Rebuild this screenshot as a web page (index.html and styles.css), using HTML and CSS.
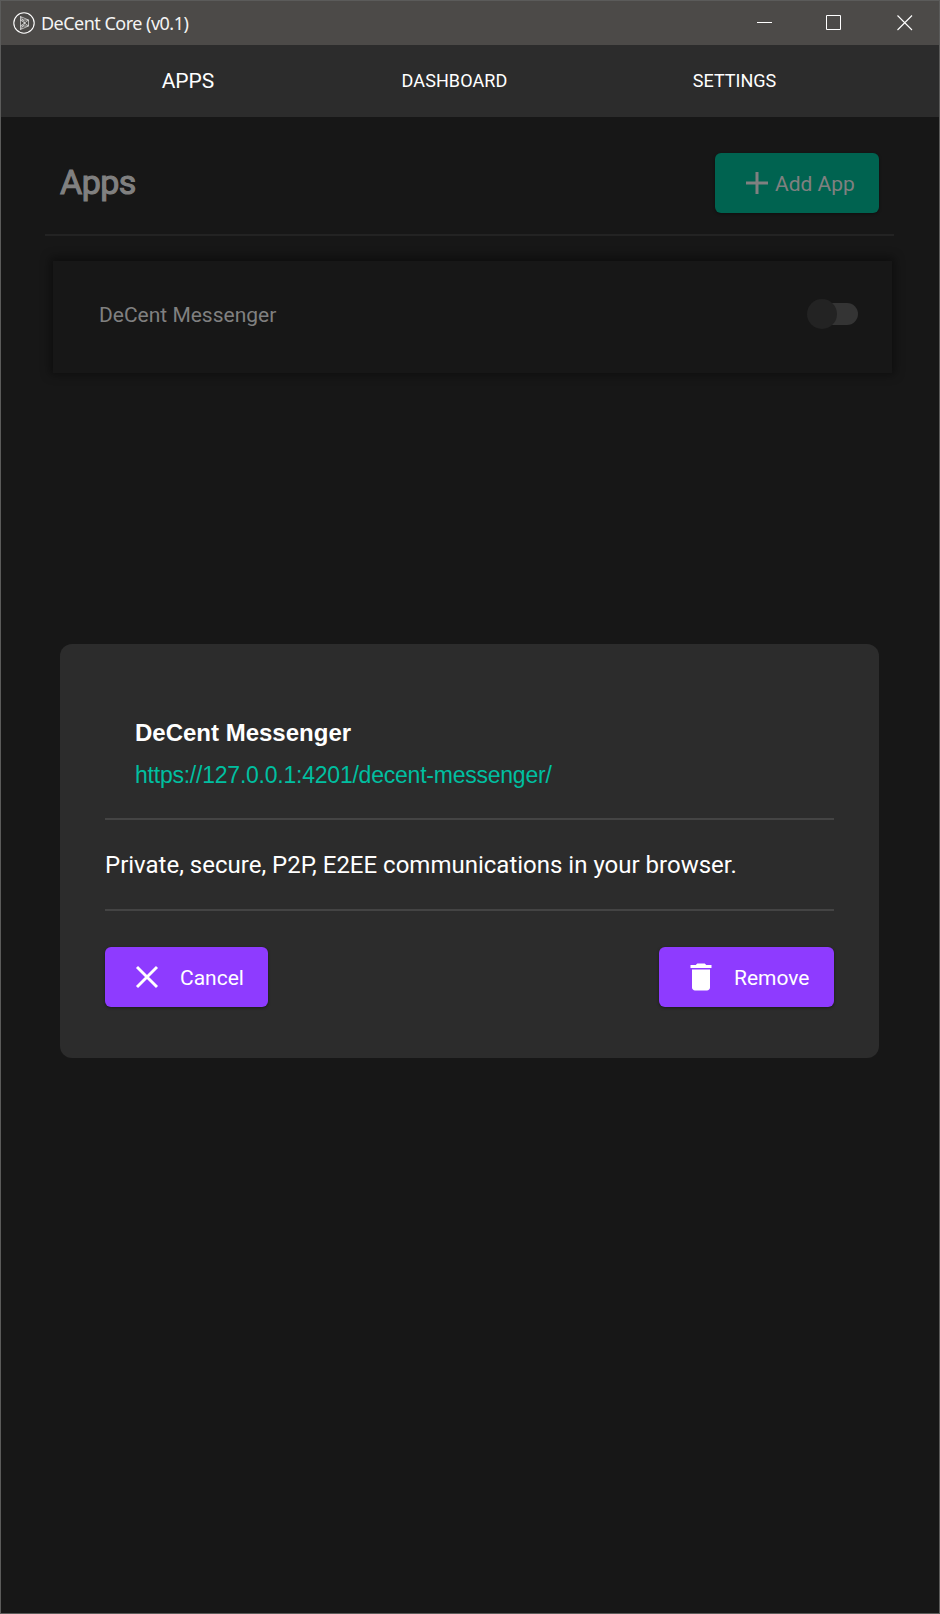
FILE: index.html
```html
<!DOCTYPE html>
<html lang="en">
<head>
<meta charset="utf-8">
<title>DeCent Core (v0.1)</title>
<link rel="stylesheet" href="styles.css">
</head>
<body>
<div class="window">
  <header class="titlebar">
    <svg class="logo" viewBox="0 0 22 22" fill="none" stroke="#fff"><circle cx="11" cy="11" r="10.2" stroke-width="1.100"/><path d="M7.500 4.500L15.500 8v6L7.500 17.500zM7.500 8l8 6M7.500 14l8-6M7.500 4.500L12 11l-4.500 6.500M7.500 8h8M7.500 14h8" stroke-width=".6"/></svg>
    <span class="caption">DeCent Core (v0.1)</span>
    <svg class="controls" viewBox="0 0 156 16" fill="none" stroke="#fff"><path d="M0 7.500h15M69.500 .500h14v14h-14z"/><path d="M140.500 .500l14.500 14.500M155 .500L140.500 15" stroke-width="1.1"/></svg>
  </header>
  <nav class="nav"><a class="tab active">APPS</a><a class="tab dashboard">DASHBOARD</a><a class="tab">SETTINGS</a></nav>
  <main class="page">
    <div class="page-head">
      <h1 class="heading">Apps</h1>
      <button class="btn add"><svg class="icon" viewBox="0 0 36 36"><path d="M18 7v22M7 18h22" stroke="currentColor" stroke-width="3"/></svg><span class="label">Add App</span></button>
    </div>
    <section class="app-row">
      <span class="app-name">DeCent Messenger</span>
      <span class="switch"><span class="knob"></span></span>
    </section>
    <section class="dialog">
      <div class="dialog-head">
        <h2 class="dialog-title">DeCent Messenger</h2>
        <a class="link">https://127.0.0.1:4201/decent-messenger/</a>
      </div>
      <p class="description">Private, secure, P2P, E2EE communications in your browser.</p>
      <div class="actions">
        <button class="btn cancel"><svg class="icon" viewBox="0 0 36 36"><path d="M8 8l20 20M28 8L8 28" stroke="currentColor" stroke-width="2.900"/></svg><span class="label">Cancel</span></button>
        <button class="btn remove"><svg class="icon" viewBox="0 0 24 24" fill="currentColor"><path d="M6 19c0 1.100.9 2 2 2h8c1.100 0 2-.9 2-2V7H6v12zM19 4h-3.500l-1-1h-5l-1 1H5v2h14V4z"/></svg><span class="label">Remove</span></button>
      </div>
    </section>
  </main>
</div>
</body>
</html>
```
FILE: styles.css
```css
* { box-sizing: border-box; }
body { margin: 0; background: #171717; font-family: Roboto, sans-serif; }
h1, h2, p { margin: 0; }
.window { height: 1614px; border: 1px solid #5b5b5a; background: #171717; color: #fff; }
.titlebar { height: 44px; background: #4c4a48; display: flex; align-items: center; padding: 0 26px 0 12px; }
.logo { width: 22px; height: 22px; margin-top: -1px; }
.caption { font: 18px/24px "Noto Sans", sans-serif; margin-left: 6px; letter-spacing: -.52px; white-space: nowrap; color: #f4f4f4; }
.controls { width: 156px; height: 16px; margin-left: auto; }
.nav { height: 72px; background: #2c2c2c; display: grid; grid-template-columns: 374px 159px 1fr; align-items: center; text-align: center; padding-right: 4px; }
.tab { font-size: 18px; line-height: 24px; }
.dashboard { letter-spacing: .1px; }
.active { font-size: 21px; }
.page { padding: 0 44px; }
.page-head { height: 119px; margin-right: 1px; padding: 36px 15px 21px; border-bottom: 2px solid #232323; display: flex; justify-content: space-between; align-items: flex-start; }
.heading { font-size: 34px; line-height: 59px; letter-spacing: -.5px; color: #808080; font-weight: 400; -webkit-text-stroke: 1.1px #808080; }
.btn { height: 60px; border: 0; border-radius: 6px; padding: 0 24px; display: flex; align-items: center; color: #fff; background: #8e3bff; font: 21px/24px Roboto, sans-serif; box-shadow: 0 1px 3px rgba(0, 0, 0, .4); }
.icon { width: 36px; height: 36px; flex: none; }
.label { white-space: nowrap; padding-top: 2px; }
.add { width: 164px; background: #006350; color: #808080; }
.app-row { margin: 25px 3px 0 8px; height: 112px; padding: 0 34px 6px 46px; display: flex; justify-content: space-between; align-items: center; box-shadow: 0 -1px 9px 3px rgba(0, 0, 0, .4); color: #808080; }
.app-name { font-size: 21px; line-height: 24px; padding-top: 1px; }
.switch { width: 48px; height: 22px; border-radius: 11px; background: #343434; display: flex; align-items: center; }
.knob { width: 30px; height: 30px; border-radius: 50%; background: #232323; margin-left: -3px; flex: none; }
.dialog { margin: 271px 16px 0 15px; height: 414px; border-radius: 12px; background: #2c2c2c; padding: 68px 45px 51px; }
.dialog-head { height: 108px; padding-left: 30px; border-bottom: 2px solid #444; }
.dialog-title { font: 700 24px/42px "Liberation Sans", Arial, sans-serif; }
.link { display: block; color: #00bfa0; font: 23px/42px "Liberation Sans", Arial, sans-serif; letter-spacing: -.23px; white-space: nowrap; }
.description { height: 91px; border-bottom: 2px solid #444; font-size: 24px; line-height: 90px; white-space: nowrap; }
.actions { margin-top: 36px; display: flex; justify-content: space-between; }
.cancel { width: 163px; }
.remove { width: 175px; }
.actions .label { margin-left: 15px; }
```
